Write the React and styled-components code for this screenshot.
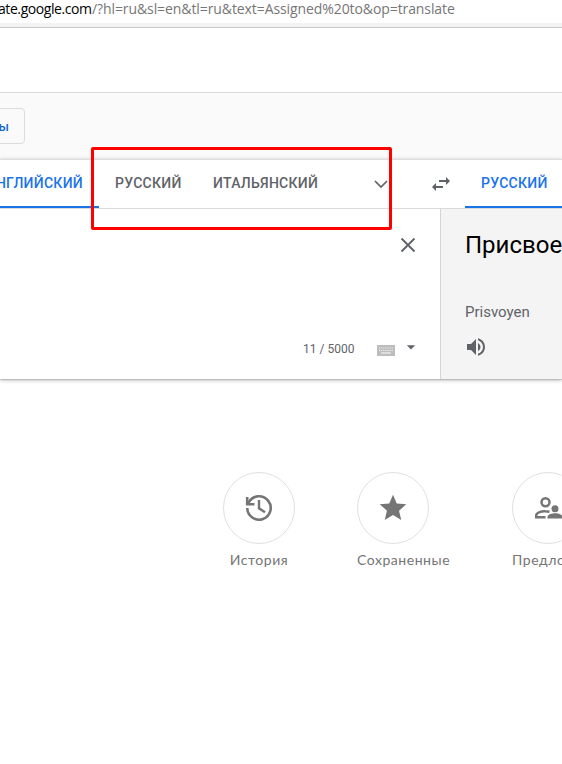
import React from 'react';
import styled, { createGlobalStyle } from 'styled-components';
import { MdStar, MdSwapHoriz, MdVolumeUp, MdArrowDropDown } from 'react-icons/md';

const GlobalStyle = createGlobalStyle`
  * { box-sizing: border-box; }
  html, body { margin: 0; background: #fff; overflow: hidden; }
`;

const Page = styled.div`
  position: relative;
  width: 562px;
  height: 764px;
  overflow: hidden;
  background: #fff;
  font-family: Roboto, sans-serif;
  color: #5f6368;
`;

const AddressBar = styled.div`
  height: 23px;
  display: flex;
  align-items: flex-start;
  margin-left: -2px;
  font: 14px/17px "Open Sans", sans-serif;
  white-space: nowrap;
  color: #767676;
`;

const Host = styled.span`
  width: 94px;
  flex: none;
  color: #000;
  letter-spacing: -0.42px;
`;

const UrlQuery = styled.span`
  letter-spacing: -0.09px;
`;

const BrowserEdge = styled.div`
  height: 5px;
  background: #f3f3f3;
  border-bottom: 1px solid #c9c9c9;
`;

const SiteHeader = styled.header`
  height: 65px;
  border-bottom: 1px solid #dadada;
`;

const ModeBar = styled.div`
  height: 66px;
  padding-top: 15px;
  background: #fafafa;
`;

const ModeButton = styled.button`
  display: flex;
  align-items: center;
  justify-content: flex-end;
  width: 35px;
  height: 36px;
  margin: 0 0 0 -10px;
  padding: 2px 15px 0 0;
  border: 1px solid #dadce0;
  border-radius: 4px;
  background: transparent;
  color: #1967d2;
  font: 500 13px/16px Roboto, sans-serif;
`;

const Translator = styled.main`
  height: 220px;
  border-top: 1px solid #dedede;
  box-shadow: 0 1px 4px rgba(0, 0, 0, 0.3), 0 1px 1px rgba(0, 0, 0, 0.1);
  background: #fff;
`;

const LanguageBar = styled.div`
  display: flex;
  height: 49px;
  border-bottom: 1px solid #dadada;
`;

const SourceTabs = styled.div`
  display: flex;
  width: 417px;
  flex: none;
`;

const Tab = styled.div`
  display: flex;
  flex: none;
  justify-content: ${(p) => (p.$clipped ? 'flex-end' : 'flex-start')};
  width: ${(p) => p.$width}px;
  height: 48px;
  padding: 0 16px;
  border-bottom: 2px solid ${(p) => (p.$active ? '#1a73e8' : 'transparent')};
  color: ${(p) => (p.$active ? '#1a73e8' : '#5f6368')};
  font-size: 14px;
  font-weight: 500;
  line-height: 46px;
  letter-spacing: 0.28px;
  white-space: nowrap;
`;

const MoreLanguages = styled.div`
  display: flex;
  align-items: center;
  padding-left: 40px;
`;

const Swap = styled.div`
  display: flex;
  align-items: center;
  justify-content: center;
  width: 48px;
  flex: none;
`;

const Panels = styled.div`
  display: flex;
  height: 170px;
`;

const SourcePanel = styled.section`
  display: flex;
  flex-direction: column;
  justify-content: space-between;
  align-items: flex-end;
  width: 441px;
  flex: none;
  padding: 24px 20px 20px 0;
  border-right: 1px solid #d4d4d4;
`;

const ClearIcon = styled.div`
  display: flex;
`;

const SourceTools = styled.div`
  display: flex;
  align-items: center;
  height: 20px;
  margin-right: -1px;
`;

const Counter = styled.span`
  width: 74px;
  font-size: 12px;
  line-height: 20px;
  white-space: nowrap;
`;

const Keyboard = styled.span`
  display: flex;
  width: 24px;
  padding-top: 2px;
`;

const Caret = styled.span`
  display: flex;
  width: 20px;
  padding-bottom: 4px;
`;

const ResultPanel = styled.section`
  flex: 1;
  overflow: hidden;
  padding: 20px 0 0 24px;
  background: #f4f4f4;
  white-space: nowrap;
`;

const Result = styled.div`
  height: 67px;
  color: #000;
  font-size: 24px;
  line-height: 32px;
`;

const Transliteration = styled.div`
  height: 39px;
  font-size: 15px;
  line-height: 32px;
`;

const Listen = styled.div`
  display: flex;
  margin-left: -1px;
`;

const Shortcuts = styled.nav`
  display: flex;
  gap: 62px;
  width: max-content;
  padding: 93px 0 0 223px;
`;

const Shortcut = styled.div`
  display: flex;
  flex-direction: column;
  align-items: flex-start;
  white-space: nowrap;
  color: #757575;
`;

const Circle = styled.div`
  display: flex;
  align-items: center;
  justify-content: center;
  width: 72px;
  height: 72px;
  border: 1px solid #e0e0e0;
  border-radius: 50%;
`;

const ShortcutLabel = styled.span`
  min-width: 72px;
  margin-top: 6px;
  font-family: Lato, sans-serif;
  font-size: 14px;
  line-height: 20px;
  letter-spacing: 0.54px;
  text-align: center;
`;

const Highlight = styled.div`
  position: absolute;
  left: 91px;
  top: 147px;
  width: 301px;
  height: 83px;
  border: 3px solid #fe0000;
  border-radius: 2px;
`;

const HistoryIcon = () => (
  <svg width="32" height="32" viewBox="0 0 32 32" fill="none" stroke="currentColor" strokeWidth="2.6">
    <path d="M4.300 16A11.700 11.700 0 1 0 6 9.900L4.800 12" />
    <path d="M4.200 5v7.200H11.500" />
    <path d="M16 8v8.300l6 4" strokeWidth="2.400" />
  </svg>
);

const ContributeIcon = () => (
  <svg width="32" height="32" viewBox="0 0 32 32" fill="none" stroke="currentColor" strokeWidth="2.500">
    <circle cx="13.500" cy="10.200" r="4" />
    <path d="M13.500 25.300H4.200V23.500C4.200 20.500 10 19 13 19.200c1.800 0 3.300.3 4.500.6" />
    <g fill="currentColor" stroke="none">
      <circle cx="23" cy="16.700" r="3.500" />
      <path d="M15.500 26.500V25c0-3 5-3.800 7.500-3.800s7.500.8 7.500 3.800v1.500z" />
    </g>
  </svg>
);

const KeyboardIcon = () => (
  <svg width="18" height="11" viewBox="0 0 18 11">
    <path d="M0 0h18v11H0z" fill="#bdbdbd" />
    <path d="M2 3h14M2 5.500h14" stroke="#f3f3f3" strokeWidth="1.200" strokeDasharray="1.200 .9" />
    <path d="M4 8h10" stroke="#f3f3f3" strokeWidth="1.200" />
  </svg>
);

export default function App() {
  return (
    <Page>
      <GlobalStyle />
      <AddressBar>
        <Host>ate.google.com</Host>
        <UrlQuery>/?hl=ru&amp;sl=en&amp;tl=ru&amp;text=Assigned%20to&amp;op=translate</UrlQuery>
      </AddressBar>
      <BrowserEdge />
      <SiteHeader />
      <ModeBar>
        <ModeButton>ы</ModeButton>
      </ModeBar>
      <Translator>
        <LanguageBar>
          <SourceTabs>
            <Tab $active $clipped $width={99}>АНГЛИЙСКИЙ</Tab>
            <Tab $width={98}>РУССКИЙ</Tab>
            <Tab $width={137}>ИТАЛЬЯНСКИЙ</Tab>
            <MoreLanguages>
              <svg width="14" height="10" viewBox="0 0 14 10" fill="none" stroke="#5f6368" strokeWidth="1.700">
                <path d="M1 2l6 6 6-6" />
              </svg>
            </MoreLanguages>
          </SourceTabs>
          <Swap><MdSwapHoriz size={24} /></Swap>
          <Tab $active $width={98}>РУССКИЙ</Tab>
        </LanguageBar>
        <Panels>
          <SourcePanel>
            <ClearIcon>
              <svg width="24" height="24" viewBox="0 0 24 24" fill="none" stroke="#5f6368" strokeWidth="1.900">
                <path d="M5.500 5.500l13 13M18.500 5.500l-13 13" />
              </svg>
            </ClearIcon>
            <SourceTools>
              <Counter>11 / 5000</Counter>
              <Keyboard><KeyboardIcon /></Keyboard>
              <Caret><MdArrowDropDown size={20} /></Caret>
            </SourceTools>
          </SourcePanel>
          <ResultPanel>
            <Result>Присвоен</Result>
            <Transliteration>Prisvoyen</Transliteration>
            <Listen><MdVolumeUp size={24} /></Listen>
          </ResultPanel>
        </Panels>
      </Translator>
      <Shortcuts>
        <Shortcut>
          <Circle><HistoryIcon /></Circle>
          <ShortcutLabel>История</ShortcutLabel>
        </Shortcut>
        <Shortcut>
          <Circle><MdStar size={32} /></Circle>
          <ShortcutLabel>Сохраненные</ShortcutLabel>
        </Shortcut>
        <Shortcut>
          <Circle><ContributeIcon /></Circle>
          <ShortcutLabel>Предложить</ShortcutLabel>
        </Shortcut>
      </Shortcuts>
      <Highlight />
    </Page>
  );
}
